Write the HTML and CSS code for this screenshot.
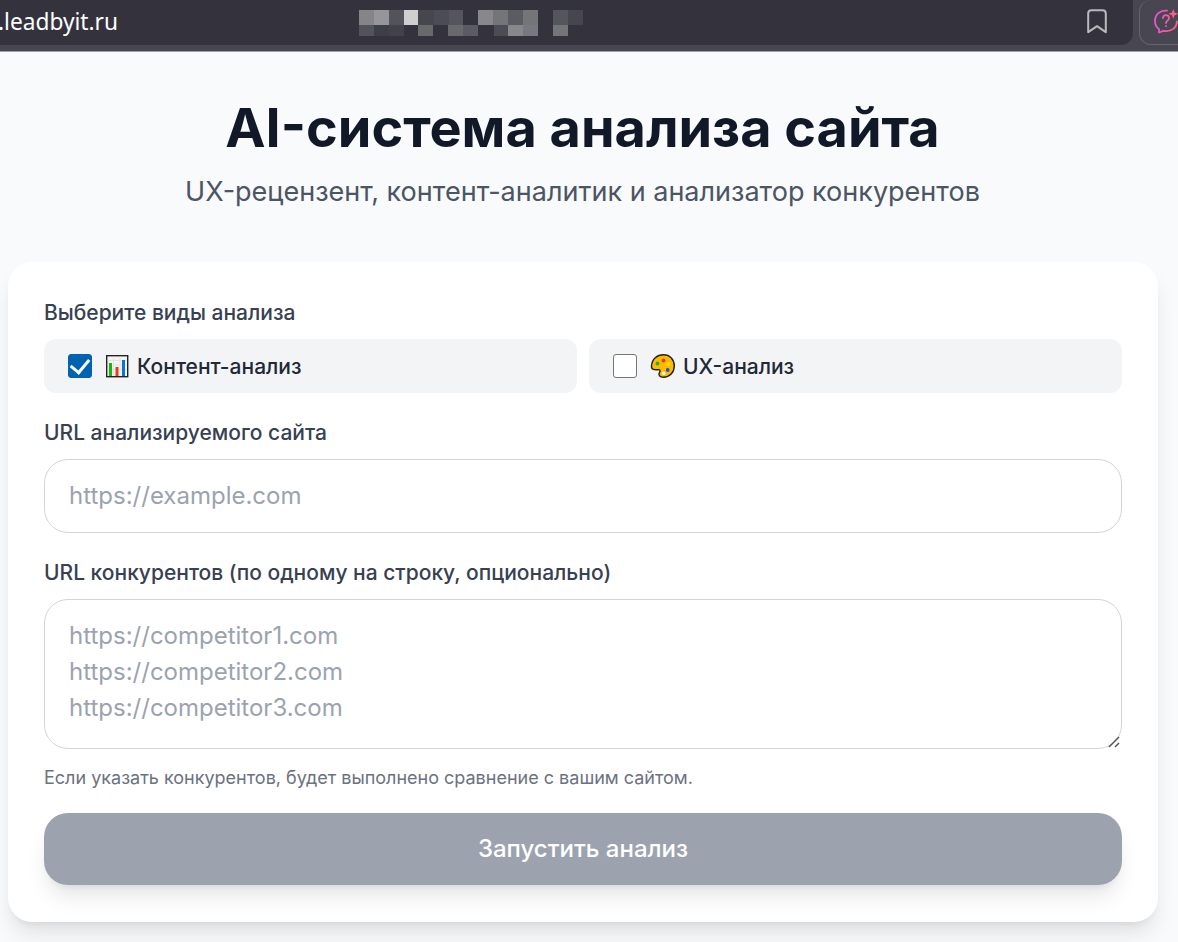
FILE: index.html
```html
<!DOCTYPE html>
<html lang="ru">
<head>
    <meta charset="UTF-8">
    <meta name="viewport" content="width=device-width, initial-scale=1.0">
    <title>AI-система анализа сайта</title>
    <link rel="stylesheet" href="styles.css">
</head>
<body>

<div class="browser-bar">
    <div class="address">
        <span class="domain">.leadbyit.ru</span>
        <svg class="mosaic" width="225" height="26" viewBox="0 0 225 26" shape-rendering="crispEdges">
            <path fill="#858489" d="M0 0h15v15H0z"/>
            <path fill="#96959a" d="M15 0h15v15H15z"/>
            <path fill="#53535c" d="M30 0h15v15H30zM0 15h15v11H0z"/>
            <path fill="#cfcfcf" d="M45 0h14v15H45z"/>
            <path fill="#46464f" d="M59 0h16v15H59zM209 0h15v15h-15z"/>
            <path fill="#4c4c55" d="M75 0h15v15H75zM135 15h15v11h-15z"/>
            <path fill="#55555e" d="M90 0h14v15H90zM194 0h15v15h-15z"/>
            <path fill="#88878c" d="M119 0h15v15h-15zM149 15h15v11h-15z"/>
            <path fill="#747579" d="M134 0h15v15h-15zM164 0h15v15h-15zM194 15h15v11h-15z"/>
            <path fill="#5b5b64" d="M149 0h15v15h-15zM104 15h15v11h-15z"/>
            <path fill="#3e3e48" d="M15 15h15v11H15z"/>
            <path fill="#42424b" d="M30 15h15v11H30z"/>
            <path fill="#68696d" d="M59 15h15v11H59zM89 15h15v11H89z"/>
            <path fill="#777880" d="M164 15h15v11h-15z"/>
        </svg>
        <svg class="bookmark" width="20" height="25" viewBox="0 0 20 25" fill="none" stroke="#b9b9bd" stroke-width="2" stroke-linejoin="round">
            <path d="M1.2 23.2V4.5Q1.2 1.2 4.5 1.2H15.5Q18.8 1.2 18.8 4.5V23.2L10 17.2z"/>
        </svg>
    </div>
    <div class="assistant">
        <svg width="26" height="26" viewBox="0 0 26 26" fill="none" stroke="url(#pink)" stroke-width="1.8" stroke-linecap="round" stroke-linejoin="round">
            <defs>
                <linearGradient id="pink" gradientUnits="userSpaceOnUse" x1="0" y1="0" x2="24" y2="0">
                    <stop offset="0" stop-color="#e455d6"/>
                    <stop offset="1" stop-color="#ff5c86"/>
                </linearGradient>
            </defs>
            <path d="M13 1.600C6 1 1 5.500 1 12c0 3.600 1.600 6.300 4 8.100V23.500l4.500-1.700c7.500 1.400 13.300-2.800 13.300-9.300"/>
            <path d="M9 9c0-4 6-3.600 6 0 0 2.600-3 2.600-3 5M12 17v.2"/>
            <path fill="#ff5c86" stroke="none" d="M19.300 0l1.300 3.400 3.600 1.400-3.600 1.400-1.300 3.600-1.300-3.600-3.600-1.400 3.600-1.400z"/>
        </svg>
    </div>
</div>

<div class="page">
    <header class="page-header">
        <h1>AI-система анализа сайта</h1>
        <p>UX-рецензент, контент-аналитик и анализатор конкурентов</p>
    </header>

    <form class="card">
        <div class="field">
            <div class="label">Выберите виды анализа</div>
            <div class="options">
                <label class="option">
                    <input type="checkbox" name="content" checked>
                    <svg class="emoji" width="24" height="24" viewBox="0 0 24 24">
                        <rect x="1.700" y="1.700" width="21" height="21" fill="#f4f4f4" stroke="#222" stroke-width="1.400"/>
                        <path d="M2.500 6.500h19.500M2.500 11h19.500M2.500 15.500h19.500M8.500 2.500v19.500M15 2.500v19.500" stroke="#dedede" stroke-width=".7"/>
                        <path fill="#16b80e" d="M4 9h3v13H4z"/>
                        <path fill="#f03a17" d="M10.500 13h3v9h-3z"/>
                        <path fill="#0078d7" d="M17 6h3v16h-3z"/>
                    </svg>
                    <span>Контент-анализ</span>
                </label>
                <label class="option">
                    <input type="checkbox" name="ux">
                    <svg class="emoji" width="25" height="24" viewBox="0 0 25 24">
                        <path fill="#ffb900" stroke="#222" stroke-width="1.400" stroke-linejoin="round" d="M1.500 12C2 5 7 .8 13.500.8S24.300 5.500 24.300 12 19.500 23.200 13.500 23.200c-4 0-5.500-2.400-4-4.700 1.200-2 .5-3-1.300-2.800-3.500.3-7 .3-6.700-3.700z"/>
                        <circle cx="7.500" cy="9.500" r="1.900" fill="#16b80e"/>
                        <circle cx="13.500" cy="6.500" r="1.900" fill="#f03a17"/>
                        <circle cx="18.500" cy="10" r="1.900" fill="#ffe000"/>
                        <circle cx="17.700" cy="16" r="1.900" fill="#1b50d8"/>
                        <circle cx="13.700" cy="19.300" r="1.700" fill="#fff"/>
                    </svg>
                    <span>UX-анализ</span>
                </label>
            </div>
        </div>

        <div class="field">
            <label class="label" for="site">URL анализируемого сайта</label>
            <input class="control" id="site" type="url" placeholder="https://example.com">
        </div>

        <div class="field last">
            <label class="label" for="competitors">URL конкурентов (по одному на строку, опционально)</label>
            <div class="textarea-wrap">
                <textarea class="control" id="competitors" placeholder="https://competitor1.com&#10;https://competitor2.com&#10;https://competitor3.com"></textarea>
                <svg class="grip" width="12" height="12" viewBox="0 0 12 12" stroke="#555" stroke-width="1.500">
                    <path d="M1 11L11 1M7 11l4-4"/>
                </svg>
            </div>
            <p class="hint">Если указать конкурентов, будет выполнено сравнение с вашим сайтом.</p>
        </div>

        <button class="submit" type="button">Запустить анализ</button>
    </form>
</div>

</body>
</html>
```

FILE: styles.css
```css
* {
    box-sizing: border-box;
}

body {
    margin: 0;
    height: 942px;
    overflow: hidden;
    background: #f9fafc;
    color: #111827;
    font-family: Inter, "Liberation Sans", sans-serif;
}

h1, p {
    margin: 0;
}

.browser-bar {
    display: flex;
    gap: 6px;
    height: 52px;
    padding-bottom: 6px;
    background: #484751;
    border-bottom: 1px solid #a0a0a7;
}

.address {
    display: flex;
    align-items: flex-start;
    width: 1133px;
    flex-shrink: 0;
    background: #34333d;
    border-radius: 0 0 12px 0;
}

.domain {
    width: 359px;
    margin-left: -2px;
    padding-top: 7px;
    color: #fff;
    font-family: "Noto Sans", sans-serif;
    font-size: 22.7px;
    line-height: 30px;
}

.mosaic {
    margin: 10px 0 0 2px;
}

.bookmark {
    margin: 9px 26px 0 auto;
}

.assistant {
    width: 60px;
    flex-shrink: 0;
    padding: 9px 0 0 14px;
    border: 1px solid #65646e;
    border-top: none;
    border-radius: 12px;
}

.page {
    padding: 46px 20px 0 7px;
}

.page-header {
    margin-bottom: 49px;
    text-align: center;
}

.page-header h1 {
    margin-bottom: 13px;
    font-size: 54px;
    font-weight: 700;
    line-height: 60px;
}

.page-header p {
    color: #4b5563;
    font-size: 27.03px;
    line-height: 42px;
}

.card {
    margin-left: 1px;
    padding: 36px 36px 37px;
    background: #fff;
    border-radius: 24px;
    box-shadow: 0 15px 22px -4px rgba(0,0,0,0.1), 0 6px 9px -6px rgba(0,0,0,0.1);
}

.field {
    margin-bottom: 25px;
}

.field.last {
    margin-bottom: 22px;
}

.label {
    display: block;
    margin-bottom: 11px;
    color: #374151;
    font-size: 21px;
    font-weight: 500;
    line-height: 30px;
}

.options {
    display: grid;
    grid-template-columns: 1fr 1fr;
    gap: 12px;
}

.option {
    display: flex;
    align-items: center;
    height: 54px;
    padding: 0 24px;
    background: #f3f4f6;
    border-radius: 12px;
    color: #1f2937;
    font-size: 21px;
    font-weight: 500;
}

.option input {
    appearance: none;
    width: 24px;
    height: 24px;
    margin: 0 13px 0 0;
    background: #fff;
    border: 1.5px solid #767676;
    border-radius: 3px;
}

.option input:checked {
    display: grid;
    place-items: center;
    background: #0063b1;
    border-color: #0063b1;
}

.option input:checked::after {
    content: "";
    width: 9px;
    height: 15px;
    margin-top: -5px;
    margin-left: -1px;
    border: solid #fff;
    border-width: 0 3.5px 3.5px 0;
    transform: rotate(40deg);
}

.emoji {
    margin-right: 8px;
}

.control {
    display: block;
    width: 100%;
    height: 74px;
    padding: 17px 24px 19px;
    background: #fff;
    border: 1px solid #d1d5db;
    border-radius: 24px;
    font-family: inherit;
    font-size: 24px;
    line-height: 36px;
}

.control::placeholder {
    color: #9ca3af;
    opacity: 1;
}

textarea.control {
    height: 150px;
    padding-top: 18px;
    resize: none;
    overflow: hidden;
}

.textarea-wrap {
    position: relative;
}

.grip {
    position: absolute;
    right: 2px;
    bottom: 1px;
}

.hint {
    margin-top: 15px;
    color: #6b7280;
    font-size: 18px;
    line-height: 27px;
}

.submit {
    display: block;
    width: 100%;
    height: 72px;
    padding-bottom: 2px;
    border: none;
    border-radius: 24px;
    background: #9ca3af;
    color: #fff;
    font-family: inherit;
    font-size: 24px;
    font-weight: 500;
    box-shadow: 0 15px 22px -4px rgba(0,0,0,0.1), 0 6px 9px -6px rgba(0,0,0,0.1);
}
```
